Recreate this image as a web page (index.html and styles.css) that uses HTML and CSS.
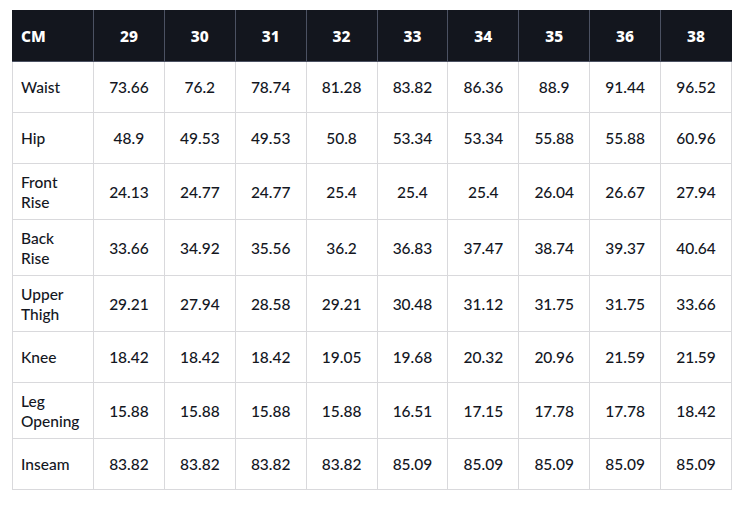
FILE: index.html
```html
<!DOCTYPE html>
<html>
<head>
<meta charset="utf-8">
<link rel="stylesheet" href="styles.css">
</head>
<body>
<div class="wrap">
<table class="size-table">
  <thead>
    <tr><th class="label">CM</th><th>29</th><th>30</th><th>31</th><th>32</th><th>33</th><th>34</th><th>35</th><th>36</th><th>38</th></tr>
  </thead>
  <tbody>
    <tr><td class="label">Waist</td><td>73.66</td><td>76.2</td><td>78.74</td><td>81.28</td><td>83.82</td><td>86.36</td><td>88.9</td><td>91.44</td><td>96.52</td></tr>
    <tr><td class="label">Hip</td><td>48.9</td><td>49.53</td><td>49.53</td><td>50.8</td><td>53.34</td><td>53.34</td><td>55.88</td><td>55.88</td><td>60.96</td></tr>
    <tr><td class="label">Front<br>Rise</td><td>24.13</td><td>24.77</td><td>24.77</td><td>25.4</td><td>25.4</td><td>25.4</td><td>26.04</td><td>26.67</td><td>27.94</td></tr>
    <tr><td class="label">Back<br>Rise</td><td>33.66</td><td>34.92</td><td>35.56</td><td>36.2</td><td>36.83</td><td>37.47</td><td>38.74</td><td>39.37</td><td>40.64</td></tr>
    <tr><td class="label">Upper<br>Thigh</td><td>29.21</td><td>27.94</td><td>28.58</td><td>29.21</td><td>30.48</td><td>31.12</td><td>31.75</td><td>31.75</td><td>33.66</td></tr>
    <tr><td class="label">Knee</td><td>18.42</td><td>18.42</td><td>18.42</td><td>19.05</td><td>19.68</td><td>20.32</td><td>20.96</td><td>21.59</td><td>21.59</td></tr>
    <tr><td class="label">Leg<br>Opening</td><td>15.88</td><td>15.88</td><td>15.88</td><td>15.88</td><td>16.51</td><td>17.15</td><td>17.78</td><td>17.78</td><td>18.42</td></tr>
    <tr><td class="label">Inseam</td><td>83.82</td><td>83.82</td><td>83.82</td><td>83.82</td><td>85.09</td><td>85.09</td><td>85.09</td><td>85.09</td><td>85.09</td></tr>
  </tbody>
</table>
</div>
</body>
</html>
```

FILE: styles.css
```css
html, body {
  margin: 0;
  padding: 0;
  background: #ffffff;
}
.wrap {
  padding: 10px 0 0 12px;
}
.size-table {
  width: 720px;
  border-collapse: collapse;
  table-layout: fixed;
  font-family: "Lato", "Liberation Sans", sans-serif;
  font-size: 15.5px;
  font-weight: 500;
  color: #14171f;
}
.size-table th,
.size-table td {
  border: 1px solid #d9d9dc;
  text-align: center;
  vertical-align: middle;
  padding: 7.5px 8px;
  line-height: 20px;
  height: 35px;
  box-sizing: content-box;
}
.size-table th {
  background: #13161e;
  color: #ffffff;
  font-family: "Noto Sans", "Open Sans", sans-serif;
  font-weight: 800;
  font-size: 15.5px;
  border-color: #4b5162;
  border-top-color: #13161e;
}
.size-table th:first-child { border-left-color: #13161e; }
.size-table th:last-child { border-right-color: #13161e; }
.size-table .label {
  text-align: left;
  width: 64px;
}
```
